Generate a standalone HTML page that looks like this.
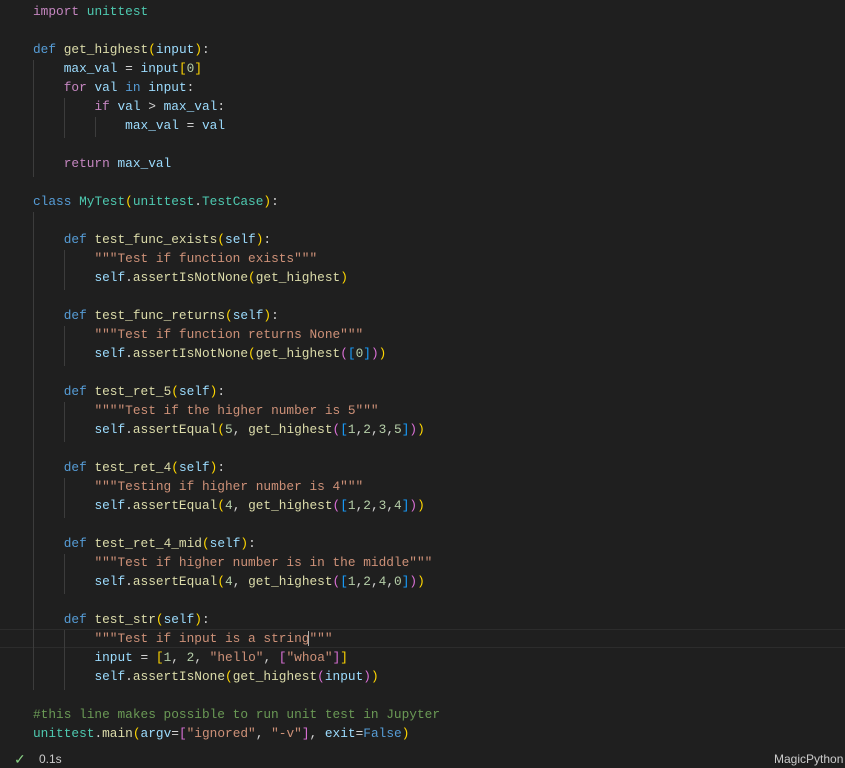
<!DOCTYPE html>
<html><head><meta charset="utf-8"><style>
html,body{margin:0;padding:0;width:845px;height:766px;background:#1f1f1f;overflow:hidden}
pre{position:absolute;left:33px;top:2px;margin:0;font-family:"Liberation Mono",monospace;font-size:12.8px;line-height:19px;color:#d4d4d4}
.k{color:#569cd6}.p{color:#c586c0}.f{color:#dcdcaa}.v{color:#9cdcfe}.c{color:#4ec9b0}.s{color:#ce9178}.n{color:#b5cea8}.m{color:#6a9955}
.y{color:#ffd700}.q{color:#da70d6}.b{color:#179fff}
.g{position:absolute;width:1px;background:#3c3c3c}
.cur{position:absolute;left:0;right:0;top:629px;height:17px;border-top:1px solid #2c2c2c;border-bottom:1px solid #2c2c2c}
.st{position:absolute;font-family:"Liberation Sans",sans-serif;font-size:12px;color:#cccccc}
</style></head><body>
<div class="cur"></div>
<div class="g" style="left:33px;top:60px;height:117px"></div>
<div class="g" style="left:64px;top:98px;height:40px"></div>
<div class="g" style="left:95px;top:117px;height:20px"></div>
<div class="g" style="left:33px;top:212px;height:478px"></div>
<div class="g" style="left:64px;top:250px;height:40px"></div>
<div class="g" style="left:64px;top:326px;height:40px"></div>
<div class="g" style="left:64px;top:402px;height:40px"></div>
<div class="g" style="left:64px;top:478px;height:40px"></div>
<div class="g" style="left:64px;top:554px;height:40px"></div>
<div class="g" style="left:64px;top:630px;height:60px"></div>
<pre><span class="p">import</span> <span class="c">unittest</span>

<span class="k">def</span> <span class="f">get_highest</span><span class="y">(</span><span class="v">input</span><span class="y">)</span>:
    <span class="v">max_val</span> = <span class="v">input</span><span class="y">[</span><span class="n">0</span><span class="y">]</span>
    <span class="p">for</span> <span class="v">val</span> <span class="k">in</span> <span class="v">input</span>:
        <span class="p">if</span> <span class="v">val</span> &gt; <span class="v">max_val</span>:
            <span class="v">max_val</span> = <span class="v">val</span>

    <span class="p">return</span> <span class="v">max_val</span>

<span class="k">class</span> <span class="c">MyTest</span><span class="y">(</span><span class="c">unittest</span>.<span class="c">TestCase</span><span class="y">)</span>:

    <span class="k">def</span> <span class="f">test_func_exists</span><span class="y">(</span><span class="v">self</span><span class="y">)</span>:
        <span class="s">"""Test if function exists"""</span>
        <span class="v">self</span>.<span class="f">assertIsNotNone</span><span class="y">(</span><span class="f">get_highest</span><span class="y">)</span>

    <span class="k">def</span> <span class="f">test_func_returns</span><span class="y">(</span><span class="v">self</span><span class="y">)</span>:
        <span class="s">"""Test if function returns None"""</span>
        <span class="v">self</span>.<span class="f">assertIsNotNone</span><span class="y">(</span><span class="f">get_highest</span><span class="q">(</span><span class="b">[</span><span class="n">0</span><span class="b">]</span><span class="q">)</span><span class="y">)</span>

    <span class="k">def</span> <span class="f">test_ret_5</span><span class="y">(</span><span class="v">self</span><span class="y">)</span>:
        <span class="s">""""Test if the higher number is 5"""</span>
        <span class="v">self</span>.<span class="f">assertEqual</span><span class="y">(</span><span class="n">5</span>, <span class="f">get_highest</span><span class="q">(</span><span class="b">[</span><span class="n">1</span>,<span class="n">2</span>,<span class="n">3</span>,<span class="n">5</span><span class="b">]</span><span class="q">)</span><span class="y">)</span>

    <span class="k">def</span> <span class="f">test_ret_4</span><span class="y">(</span><span class="v">self</span><span class="y">)</span>:
        <span class="s">"""Testing if higher number is 4"""</span>
        <span class="v">self</span>.<span class="f">assertEqual</span><span class="y">(</span><span class="n">4</span>, <span class="f">get_highest</span><span class="q">(</span><span class="b">[</span><span class="n">1</span>,<span class="n">2</span>,<span class="n">3</span>,<span class="n">4</span><span class="b">]</span><span class="q">)</span><span class="y">)</span>

    <span class="k">def</span> <span class="f">test_ret_4_mid</span><span class="y">(</span><span class="v">self</span><span class="y">)</span>:
        <span class="s">"""Test if higher number is in the middle"""</span>
        <span class="v">self</span>.<span class="f">assertEqual</span><span class="y">(</span><span class="n">4</span>, <span class="f">get_highest</span><span class="q">(</span><span class="b">[</span><span class="n">1</span>,<span class="n">2</span>,<span class="n">4</span>,<span class="n">0</span><span class="b">]</span><span class="q">)</span><span class="y">)</span>

    <span class="k">def</span> <span class="f">test_str</span><span class="y">(</span><span class="v">self</span><span class="y">)</span>:
        <span class="s">"""Test if input is a string<span style="border-left:1px solid #aeafad;margin-left:-1px"></span>"""</span>
        <span class="v">input</span> = <span class="y">[</span><span class="n">1</span>, <span class="n">2</span>, <span class="s">"hello"</span>, <span class="q">[</span><span class="s">"whoa"</span><span class="q">]</span><span class="y">]</span>
        <span class="v">self</span>.<span class="f">assertIsNone</span><span class="y">(</span><span class="f">get_highest</span><span class="q">(</span><span class="v">input</span><span class="q">)</span><span class="y">)</span>

<span class="m">#this line makes possible to run unit test in Jupyter</span>
<span class="c">unittest</span>.<span class="f">main</span><span class="y">(</span><span class="v">argv</span>=<span class="q">[</span><span class="s">"ignored"</span>, <span class="s">"-v"</span><span class="q">]</span>, <span class="v">exit</span>=<span class="k">False</span><span class="y">)</span></pre>
<div class="st" style="left:14px;top:751px;color:#89d185;font-size:14px">✓</div>
<div class="st" style="left:39px;top:752px">0.1s</div>
<div class="st" style="left:774px;top:752px">MagicPython</div>
</body></html>
